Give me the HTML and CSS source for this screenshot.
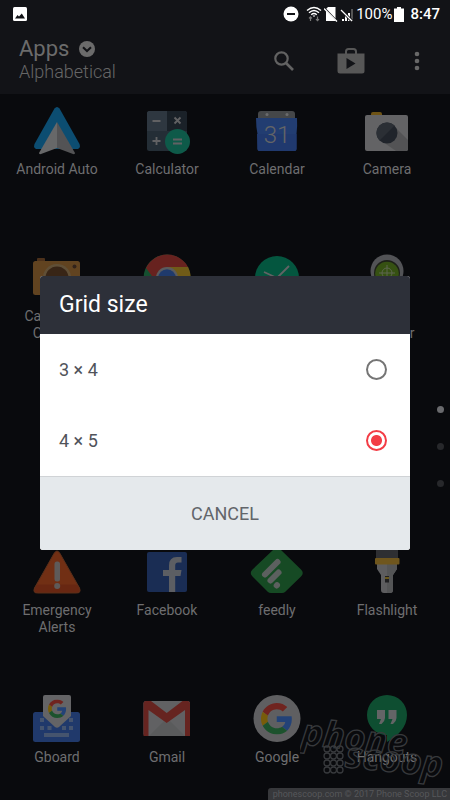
FILE: index.html
```html
<!DOCTYPE html>
<html lang="en">
<head>
<meta charset="utf-8">
<meta name="viewport" content="width=device-width, initial-scale=1">
<title>Apps</title>
<link rel="stylesheet" href="styles.css">
</head>
<body>
<svg class="defs" aria-hidden="true">
  <symbol id="g-mark" viewBox="0 0 48 48">
    <path fill="#ea4335" d="M24 9.5c3.54 0 6.71 1.22 9.21 3.6l6.85-6.85C35.9 2.38 30.47 0 24 0 14.62 0 6.51 5.38 2.56 13.22l7.98 6.19C12.43 13.72 17.74 9.5 24 9.5z"/>
    <path fill="#4285f4" d="M46.98 24.55c0-1.57-.15-3.09-.38-4.55H24v9.02h12.94c-.58 2.96-2.26 5.48-4.78 7.18l7.73 6c4.51-4.18 7.09-10.36 7.09-17.65z"/>
    <path fill="#fbbc05" d="M10.53 28.59c-.48-1.45-.76-2.99-.76-4.59s.27-3.14.76-4.59l-7.98-6.19C.92 16.46 0 20.12 0 24c0 3.88.92 7.54 2.56 10.78l7.97-6.19z"/>
    <path fill="#34a853" d="M24 48c6.48 0 11.93-2.13 15.89-5.81l-7.73-6c-2.15 1.45-4.92 2.3-8.16 2.3-6.26 0-11.57-4.22-13.47-9.91l-7.98 6.19C6.51 42.62 14.62 48 24 48z"/>
  </symbol>
</svg>

<div class="screen">
  <div class="status">
    <svg class="status-photo" width="14" height="14" viewBox="0 0 14 14"><rect width="14" height="14" rx="1.5" fill="#fff"/><path d="M2 11.500 4.500 8l1.500 1.500L8.800 6.500 12 11.500z" fill="#121317"/></svg>
    <div class="status-right">
      <svg width="16" height="16" viewBox="0 0 16 16"><circle cx="8" cy="8" r="7.500" fill="#fff"/><path d="M4 7h8v2H4z" fill="#121317"/></svg>
      <svg class="wifi" width="16" height="16" viewBox="0 0 16 16"><g fill="none" stroke="#fff" stroke-width="1.400"><path d="M1 4.500Q8-1.500 15 4.500"/><path d="M3 6.800Q8 2.200 13 6.800"/><path d="M5.200 8.800Q8 6.400 10.800 8.800"/></g><path d="M6.500 9.500h3L8 11z" fill="#fff"/><path d="M4.500 15v-4M3 12.300l1.500-1.500L6 12.300M11.500 10.500v4M10 13.200l1.500 1.500 1.500-1.500" fill="none" stroke="#777" stroke-width="1.200"/></svg>
      <svg width="14" height="16" viewBox="0 0 14 16"><path d="M4 1h7.500v14H2V3z" fill="#fff"/><path d="m0 1.500 13 13.500" stroke="#121317" stroke-width="1.600"/><path d="m0 2.500 13 13" stroke="#fff" stroke-width="1.300"/></svg>
      <svg class="signal" width="14" height="16" viewBox="0 0 14 16"><path d="M11 3h2v12h-2z" fill="#555"/><path d="M8 7h2v8H8zM5 10h2v5H5zM2 13h2v2H2z" fill="#fff"/><path d="m1 4 11 11" stroke="#121317" stroke-width="3"/><path d="m1 4 11 11" stroke="#fff" stroke-width="1.300"/></svg>
      <span>100%</span>
      <svg width="10" height="16" viewBox="0 0 10 16"><path d="M3 1h4v1.500h3V16H0V2.500h3z" fill="#fff"/></svg>
      <time>8:47</time>
    </div>
  </div>

  <header class="appbar">
    <div class="titles">
      <button class="title" type="button">Apps
        <svg width="16" height="16" viewBox="0 0 16 16"><circle cx="8" cy="8" r="8" fill="#6b6b6b"/><path d="m4 6.200 4 3.800 4-3.800" fill="none" stroke="#121317" stroke-width="2"/></svg>
      </button>
      <div class="subtitle">Alphabetical</div>
    </div>
    <button type="button" class="tool" aria-label="Search"><svg width="20" height="20" viewBox="0 0 20 20"><circle cx="7.500" cy="7.500" r="6.200" fill="none" stroke="#626262" stroke-width="2.200"/><path d="m12 12 7 7" stroke="#626262" stroke-width="2.600"/></svg></button>
    <button type="button" class="tool" aria-label="Store"><svg width="28" height="26" viewBox="0 0 28 26"><path d="M9 6V3.500Q9 1 11.500 1h5Q19 1 19 3.500V6" fill="none" stroke="#575757" stroke-width="2"/><path d="M.5 5.500h27v17.500q0 2.500-2.500 2.500H3Q.5 25.500.5 23z" fill="#575757"/><path d="M9.500 10v11l9-5.500z" fill="#121317"/></svg></button>
    <button type="button" class="tool" aria-label="More options"><svg width="6" height="20" viewBox="0 0 6 20" fill="#686868"><circle cx="3" cy="3" r="2.300"/><circle cx="3" cy="10" r="2.300"/><circle cx="3" cy="17" r="2.300"/></svg></button>
  </header>

  <main>
    <ul class="apps">
      <li><svg viewBox="0 0 48 48"><path d="M21.500 1.500q2.500-3 5 0L46.500 37q1.500 5-3 5h-39q-4.500 0-3-5z" fill="#109ce8"/><path d="M24 15 42 46q0 1.500-2 1L24 41z" fill="#aaa"/><path d="M24 15 6 46q0 1.500 2 1l16-6z" fill="#d6d6d6"/></svg><span>Android Auto</span></li>
      <li><svg viewBox="0 0 48 48"><rect x="4" y="4" width="40" height="40" rx="2.500" fill="#455a68"/><path d="M24 4h17.500Q44 4 44 6.500V24H24z" fill="#303c49"/><path d="M6.500 4H24v20H4V6.500Q4 4 6.500 4z" fill="#5a6d7d"/><circle cx="34.500" cy="34.500" r="12.500" fill="#16b890"/><path d="M9.500 14h8M9.500 34h8m-4-4v8M31.500 10.500l6 6m0-6-6 6M30 32.500h9m-9 4h9" fill="none" stroke="#c8c8c8" stroke-width="1.800"/></svg><span>Calculator</span></li>
      <li><svg viewBox="0 0 48 48"><path d="M5 12V7q0-3 3-3h31q3 0 3 3v5z" fill="#8c9090"/><circle cx="14" cy="7.500" r="1.500" fill="#ddd"/><circle cx="34" cy="7.500" r="1.500" fill="#ddd"/><path d="M3 11h41q.5 8-.5 16V42q0 2-2 2h-35q-2 0-2-2V27Q3 20 3 11z" fill="#4079e8"/><path d="M4 27h39.500V42q0 2-2 2h-35q-2 0-2-2z" fill="#3c71e0"/><text x="24" y="36" class="date" text-anchor="middle">31</text></svg><span>Calendar</span></li>
      <li><svg viewBox="0 0 48 48"><path d="M8 9V7q0-2 2-2h7q2 0 2 2v2z" fill="#e6aa20"/><rect x="2" y="8" width="43" height="36" rx="2" fill="#cdcdcd"/><path d="m31 19 14 14v9q0 2-2 2H33L17 33z" fill="#aaa"/><circle cx="24" cy="26" r="10.500" fill="#3d4450"/><path d="M16.500 33.500A10.500 10.500 0 0 1 31.500 18.500z" fill="#535b65"/></svg><span>Camera</span></li>

      <li><svg viewBox="0 0 48 48"><path d="M4 8V5q0-1 1-1h6q1 0 1 1v3z" fill="#9c602c"/><rect y="7" width="47" height="34" rx="2.500" fill="#c88638"/><circle cx="24" cy="24" r="14" fill="#c7a168"/><circle cx="24" cy="24" r="11.500" fill="#704522"/><circle cx="41.500" cy="12.500" r="2" fill="#60402a"/></svg><span>Cardboard Camera</span></li>
      <li><svg viewBox="0 0 48 48"><circle cx="24" cy="24" r="23.500" fill="#25a05a"/><path d="M3 14A23.500 23.500 0 0 1 45.500 14H24L14 29z" fill="#d63f35"/><path d="M24 13h21A23.500 23.500 0 0 1 24 47.500L34 29z" fill="#e9ba25"/><circle cx="24" cy="24" r="11" fill="#bbb"/><circle cx="24" cy="24" r="8.800" fill="#3974dd"/></svg></li>
      <li><svg viewBox="0 0 48 48"><circle cx="24" cy="24" r="22" fill="#00b07b"/><path d="m11 18 13 6 12-12" fill="none" stroke="#ccc" stroke-width="1.800"/></svg></li>
      <li><svg viewBox="0 0 48 48"><path d="M7.500 17a16.500 16.500 0 0 1 33 0c0 13-16.500 30-16.500 30S7.500 30 7.500 17z" fill="#a9a9ad"/><circle cx="24" cy="19" r="13" fill="#353b25"/><circle cx="24" cy="19.500" r="11.800" fill="#6ca51a"/><g fill="none" stroke="#c0d19d"><circle cx="24" cy="19" r="5"/><path d="M24 11v16m-8-8h16"/></g></svg><span>Device Manager</span></li>

      <li class="row-four"><svg viewBox="0 0 48 48"><path d="M21 5.500q3-5 6 0L46.500 40q2 5-3 5h-39q-5 0-3-5z" fill="#eb5c1e"/><path d="M8 45h35.500q5 0 3-5l-2-3.500H3.500L1.500 40q-2 5 3 5z" fill="#d84b18"/><path d="M21 5.500q3-5 6 0L46.500 40q2 5-3 5h-39q-5 0-3-5z" fill="none" stroke="#b85a29"/><rect x="21.500" y="13.500" width="5.500" height="20" rx="2.500" fill="#c3b9b3"/><circle cx="24.200" cy="38" r="3" fill="#c3b9b3"/></svg><span>Emergency Alerts</span></li>
      <li class="row-four"><svg viewBox="0 0 48 48"><rect x="4" y="4" width="40" height="40" rx="2" fill="#3058a8"/><path d="M26 44V28h-6v-6h6v-4.500Q26 9 34 9h4.500v5.500H35q-2.800 0-2.800 3V22h6.300l-1 6h-5.300v16z" fill="#bfc2c8"/></svg><span>Facebook</span></li>
      <li class="row-four"><svg viewBox="0 0 48 48"><path d="M20 2q4-3.500 8 0l20 19.500q3.500 3.500 0 7L32 44q-1 1-3 1H18q-2 0-3-1L-.5 28.500q-3.500-3.500 0-7z" fill="#279540"/><g stroke="#bfc5bf" stroke-width="6" stroke-linecap="round"><path d="M12 26.500 24.500 14"/><path d="m17.500 32.500 8-8"/><path d="m23.700 37.500.3-.3"/></g></svg><span>feedly</span></li>
      <li class="row-four"><svg viewBox="0 0 48 48"><path d="M13 0h22v11H13z" fill="#5b5b5e"/><path d="M14 16h20v5l-4 6v15q0 3-3 3h-6q-3 0-3-3V27l-4-6z" fill="#c0c0c0"/><path d="M24 16h10v5l-4 6v15q0 3-3 3h-3z" fill="#adadad"/><rect x="12" y="10" width="24.500" height="6.500" rx="1" fill="#e8b030"/><rect x="22" y="28" width="4" height="6.500" fill="#393939"/><path d="M22 29h4v2h-4z" fill="#d9b430"/></svg><span>Flashlight</span></li>

      <li><svg viewBox="0 0 48 48"><rect y="17" width="47" height="30" rx="2.500" fill="#3d72d9"/><g fill="#8dabe0"><path d="M7 23h4v4H7zM36 23h4v4h-4zM7 31h4v4H7zM14.500 31h4v4h-4zM29 31h4v4h-4zM36 31h4v4h-4zM11 38h25v4H11z"/></g><path d="M12 0h24q2 0 2 2v19L26 32q-2 1.500-4 0L10 21V2q0-2 2-2z" fill="#cfcfcf"/><use href="#g-mark" x="15" y="4.500" width="18.500" height="18.500"/></svg><span>Gboard</span></li>
      <li><svg viewBox="0 0 48 48"><rect x=".5" y="6" width="46.500" height="35" rx="2.500" fill="#c8c8c8"/><path d="m6 41 15-15 3 2 3-2 15 15z" fill="#bababa"/><path d="M3 6h5l15.700 12L39.500 6h5q2.500 0 2.500 2.500V41h-5V15L23.700 28 5.500 15v26h-5V8.500Q.5 6 3 6z" fill="#d34338"/></svg><span>Gmail</span></li>
      <li><svg viewBox="0 0 48 48"><circle cx="24" cy="23.500" r="23.500" fill="#c4c4c4"/><use href="#g-mark" x="8" y="8" width="31.500" height="31.500"/></svg><span>Google</span></li>
      <li><svg viewBox="0 0 48 48"><path d="M24 0a20 20 0 0 1 20 20c0 12-9 21-20 27v-7A20 20 0 0 1 24 0z" fill="#159f5c"/><path d="M14 15h8v8q0 3-3.500 6H16l2-5h-4zM25.500 15h8v8q0 3-3.500 6h-2.500l2-5h-4z" fill="#cfcfcf"/></svg><span>Hangouts</span></li>
    </ul>
  </main>

  <div class="pages" aria-hidden="true"><i class="on"></i><i></i><i></i></div>

  <div class="scrim">
    <form class="dialog" role="dialog" aria-labelledby="dialog-title">
      <h1 id="dialog-title">Grid size</h1>
      <div class="options">
        <label for="grid-small">3 × 4<input type="radio" id="grid-small" name="grid"></label>
        <label for="grid-large">4 × 5<input type="radio" id="grid-large" name="grid" checked></label>
      </div>
      <button class="cancel" type="button">CANCEL</button>
    </form>
  </div>

  <svg class="mark" width="150" height="76" viewBox="0 0 150 76" aria-hidden="true">
    <g transform="rotate(6)">
      <text x="4" y="32">phone</text>
      <text x="50" y="50">scoop</text>
    </g>
    <g fill="none" stroke="#37393c" stroke-width="1.300">
      <circle cx="27" cy="37" r="3"/><circle cx="33.500" cy="37" r="3"/><circle cx="40" cy="37" r="3"/>
      <circle cx="27" cy="44" r="3"/><circle cx="33.500" cy="44" r="3"/><circle cx="40" cy="44" r="3"/>
      <circle cx="27" cy="51" r="3"/><circle cx="33.500" cy="51" r="3"/><circle cx="40" cy="51" r="3"/>
      <circle cx="27" cy="58" r="3"/><circle cx="33.500" cy="58" r="3"/><circle cx="40" cy="58" r="3"/>
    </g>
  </svg>
  <footer class="credit">phonescoop.com © 2017 Phone Scoop LLC</footer>
</div>
</body>
</html>
```
FILE: styles.css
```css
* { box-sizing: border-box; }

body {
  margin: 0;
  background: #090a0d;
  color: #6e6e70;
  font-family: Roboto, "Liberation Sans", sans-serif;
}

button {
  padding: 0;
  border: 0;
  background: none;
  color: inherit;
  font: inherit;
}

svg { display: block; }

.defs {
  position: absolute;
  width: 0;
  height: 0;
}

.screen {
  position: relative;
  min-height: 100vh;
  overflow: hidden;
}

.status {
  display: flex;
  align-items: center;
  justify-content: space-between;
  height: 28px;
  padding: 0 10px 0 13px;
  background: #121317;
  color: #fff;
  font-size: 15px;
}

.status-right {
  display: flex;
  align-items: center;
  gap: 2px;
}

.status-right .wifi { margin-left: 5px; }

.status-right time {
  margin-left: 4px;
  font-weight: 500;
}

.appbar {
  display: flex;
  align-items: center;
  height: 66px;
  padding: 0 16px 0 19px;
  background: #121317;
}

.titles {
  flex: 1;
  padding-bottom: 2px;
}

.title {
  display: flex;
  align-items: center;
  gap: 10px;
  color: #6b6b6b;
  font-size: 22px;
  line-height: 24px;
}

.subtitle {
  color: #666;
  font-size: 18px;
  font-weight: 300;
  line-height: 22px;
}

.tool {
  display: grid;
  place-items: center;
  width: 67px;
  height: 48px;
}

.tool:last-child {
  justify-content: end;
  width: 50px;
}

.tool:last-child svg { margin-right: 14px; }

.apps {
  display: grid;
  grid-template-columns: repeat(4, 1fr);
  grid-template-rows: repeat(4, 147px) auto;
  margin: 0;
  padding: 13px 8px 0 2px;
  list-style: none;
}

.apps li {
  display: flex;
  flex-direction: column;
  align-items: center;
  gap: 6px;
}

.apps .row-four { grid-row: 4; }
.apps .row-four ~ li:not(.row-four) { grid-row: 5; }

.apps svg {
  width: 48px;
  height: 48px;
  overflow: visible;
  opacity: 0.46;
}

.apps span {
  max-width: 84px;
  font-size: 14px;
  line-height: 17px;
  text-align: center;
}

.date {
  fill: #d0d0d0;
  font-size: 24px;
  font-weight: 300;
}

.pages {
  position: absolute;
  top: 406px;
  right: 6px;
  display: grid;
  gap: 30px;
}

.pages i {
  width: 7px;
  height: 7px;
  border-radius: 50%;
  background: #27282b;
}

.pages .on { background: #696a6d; }

.scrim {
  position: absolute;
  inset: 0;
  display: grid;
  align-items: center;
  padding: 26px 40px 0;
}

.dialog {
  overflow: hidden;
  border-radius: 3px;
  background: #fff;
}

.dialog h1 {
  margin: 0;
  padding: 0 19px;
  background: #2d3039;
  color: #fff;
  font-size: 23px;
  font-weight: 400;
  line-height: 58px;
}

.options label {
  display: flex;
  align-items: center;
  justify-content: space-between;
  height: 71px;
  padding: 0 23px 0 19px;
  color: #50535a;
  font-size: 18px;
}

.options input {
  width: 21px;
  height: 21px;
  margin: 0;
  appearance: none;
  border: 2px solid #757575;
  border-radius: 50%;
}

.options input:checked {
  border-color: #f33c45;
  background: radial-gradient(circle, #f33c45 5px, transparent 6px);
}

.cancel {
  display: block;
  width: 100%;
  height: 74px;
  border-top: 1px solid #d0d3d6;
  background: #e5e9ec;
  color: #62656a;
  font-size: 18px;
}

.mark {
  position: absolute;
  right: 0;
  bottom: 12px;
}

.mark text {
  fill: none;
  stroke: #37393c;
  stroke-width: 1.300;
  font-family: "Open Sans", sans-serif;
  font-size: 36px;
  font-style: italic;
  font-weight: 700;
}

.credit {
  position: absolute;
  right: 0;
  bottom: 0;
  padding: 0 3px 0 5px;
  border-radius: 3px 0 0 0;
  background: #37383b;
  color: #56575a;
  font-size: 9px;
  line-height: 12px;
}
```
